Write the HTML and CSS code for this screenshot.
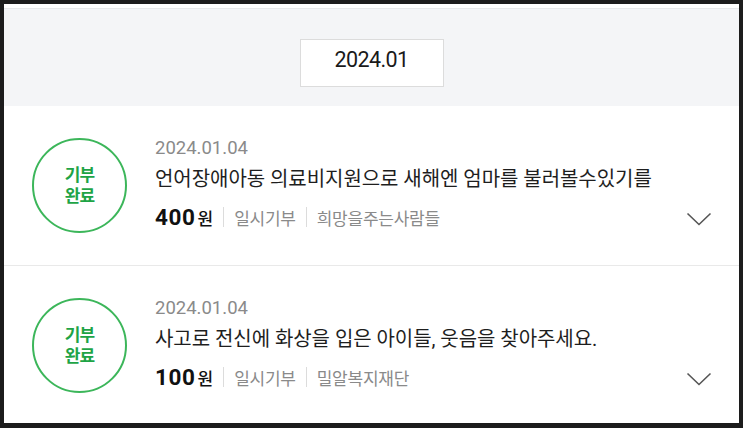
FILE: index.html
```html
<!DOCTYPE html>
<html lang="ko">
<head>
<meta charset="utf-8">
<link rel="stylesheet" href="styles.css">
</head>
<body>
<div class="frame">
  <div class="screen">
    <div class="topstrip"></div>
    <div class="month-bar">
      <div class="month-box">2024.01</div>
    </div>
    <div class="item">
      <div class="badge"><span>기부<br>완료</span></div>
      <div class="info">
        <div class="date">2024.01.04</div>
        <div class="title">언어장애아동 의료비지원으로 새해엔 엄마를 불러볼수있기를</div>
        <div class="meta">
          <span class="amount"><b>400</b><span class="won">원</span></span>
          <span class="sep"></span>
          <span class="tag">일시기부</span>
          <span class="sep"></span>
          <span class="tag">희망을주는사람들</span>
          <svg class="chev" width="26" height="14" viewBox="0 0 26 14"><polyline points="1.5,1.5 13,12.5 24.5,1.5" fill="none" stroke="#555" stroke-width="1.6"/></svg>
        </div>
      </div>
    </div>
    <div class="item">
      <div class="badge"><span>기부<br>완료</span></div>
      <div class="info">
        <div class="date">2024.01.04</div>
        <div class="title">사고로 전신에 화상을 입은 아이들, 웃음을 찾아주세요.</div>
        <div class="meta">
          <span class="amount"><b>100</b><span class="won">원</span></span>
          <span class="sep"></span>
          <span class="tag">일시기부</span>
          <span class="sep"></span>
          <span class="tag">밀알복지재단</span>
          <svg class="chev" width="26" height="14" viewBox="0 0 26 14"><polyline points="1.5,1.5 13,12.5 24.5,1.5" fill="none" stroke="#555" stroke-width="1.6"/></svg>
        </div>
      </div>
    </div>
  </div>
</div>
</body>
</html>
```
FILE: styles.css
```css
html, body {
  margin: 0;
  padding: 0;
  background: #1c1c1c;
}
body {
  font-family: Roboto, "Noto Sans CJK KR", sans-serif;
}
.frame {
  width: 743px;
  height: 428px;
  box-sizing: border-box;
  padding: 4px 4px 5px 4px;
  background: #1c1c1c;
}
.screen {
  height: 419px;
  background: #ffffff;
  overflow: hidden;
}
.topstrip {
  height: 4px;
  background: #ffffff;
  border-bottom: 1px solid #e7e8ea;
}
.month-bar {
  background: #f4f5f7;
  height: 97px;
  box-sizing: border-box;
  padding-top: 30px;
  display: flex;
  justify-content: center;
  align-items: flex-start;
}
.month-box {
  width: 142px;
  height: 38px;
  padding-bottom: 8px;
  background: #fff;
  border: 1px solid #dcdcdc;
  display: flex;
  align-items: center;
  justify-content: center;
  font-size: 21.5px;
  color: #1a1a1a;
  letter-spacing: -0.6px;
}
.item {
  display: flex;
  align-items: flex-start;
  height: 160px;
  box-sizing: border-box;
  padding: 0 27px 0 28px;
  border-bottom: 1px solid #e9e9e9;
}
.item + .item {
  border-bottom: none;
}
.badge {
  width: 95px;
  height: 95px;
  box-sizing: border-box;
  border: 2px solid #3cb65a;
  border-radius: 50%;
  margin-top: 32px;
  display: flex;
  align-items: center;
  justify-content: center;
  text-align: center;
  flex: none;
}
.badge span {
  color: #1ea446;
  font-weight: 700;
  font-size: 17px;
  line-height: 21px;
  letter-spacing: -0.8px;
}
.info {
  flex: 1;
  margin-left: 28px;
  padding-top: 30px;
}
.date {
  font-size: 18.5px;
  line-height: 24px;
  color: #8a8a8a;
}
.title {
  margin-top: 4px;
  font-size: 20px;
  line-height: 30px;
  color: #1e1e1e;
  letter-spacing: -0.05px;
  white-space: nowrap;
}
.meta {
  margin-top: 8px;
  height: 30px;
  display: flex;
  align-items: center;
}
.amount {
  display: flex;
  align-items: baseline;
  color: #111;
}
.amount b {
  font-size: 22.5px;
  font-weight: 700;
  letter-spacing: 0.6px;
}
.won {
  font-size: 17px;
  font-weight: 500;
  margin-left: 2px;
}
.sep {
  width: 1px;
  height: 20px;
  background: #dcdcdc;
  margin: 0 10px;
}
.tag {
  font-size: 17px;
  color: #8a8a8a;
  letter-spacing: -0.25px;
}
.chev {
  margin-left: auto;
  margin-top: 4px;
}
```
